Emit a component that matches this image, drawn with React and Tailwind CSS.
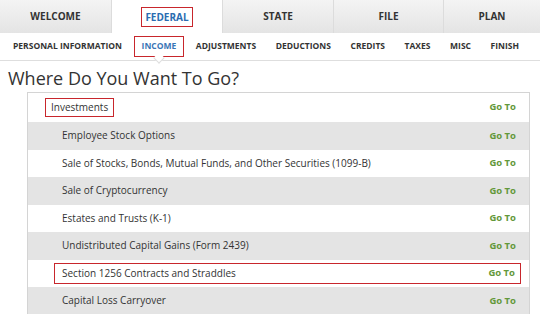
const tabs = [
  { t: 'WELCOME', w: 'w-[112px]' },
  { t: 'FEDERAL', w: 'w-[111px]' },
  { t: 'STATE', w: 'w-[111px]' },
  { t: 'FILE', w: 'w-[110px]' },
  { t: 'PLAN', w: 'flex-1' },
];
const subs = ['PERSONAL INFORMATION', 'INCOME', 'ADJUSTMENTS', 'DEDUCTIONS', 'CREDITS', 'TAXES', 'MISC', 'FINISH'];
const rows = [
  'Employee Stock Options',
  'Sale of Stocks, Bonds, Mutual Funds, and Other Securities (1099-B)',
  'Sale of Cryptocurrency',
  'Estates and Trusts (K-1)',
  'Undistributed Capital Gains (Form 2439)',
  'Section 1256 Contracts and Straddles',
  'Capital Loss Carryover',
];

const GoTo = () => (
  <span className="text-[9.5px] font-bold text-[#63983a] pr-[13px]">Go To</span>
);

export default function App() {
  return (
    <div className="w-[540px] h-[314px] overflow-hidden bg-white text-[#333]" style={{ fontFamily: '"Open Sans", sans-serif' }}>
      <div className="flex h-[33px]">
        {tabs.map(({ t, w }) => (
          <div
            key={t}
            className={`${w} flex items-center justify-center text-[10px] font-bold border-r border-[#dcdcdc] last:border-r-0 ${
              t === 'FEDERAL' ? 'bg-white text-[#2b6cb0]' : 'bg-gradient-to-b from-[#f4f4f4] to-[#e4e4e4]'
            }`}
          >
            {t === 'FEDERAL' ? (
              <span className="border-[1.5px] border-[#c8262c] px-[3px] py-[2px] leading-[14px]">{t}</span>
            ) : (
              t
            )}
          </div>
        ))}
      </div>
      <div className="flex items-center justify-between whitespace-nowrap h-[28px] border-b border-[#dedede] pl-[13px] pr-[21px] text-[8.5px] font-bold">
        {subs.map((s) =>
          s === 'INCOME' ? (
            <span key={s} className="relative text-[#3a76b6] border-[1.5px] border-[#c8262c] px-[7px] py-[3px] -mx-[8px]">
              {s}
              <span className="absolute left-1/2 -bottom-[6px] -ml-[4px] w-[8px] h-[8px] bg-white border-r border-b border-[#dedede] rotate-45" />
            </span>
          ) : (
            <span key={s}>{s}</span>
          )
        )}
      </div>
      <h1 className="text-[18px] leading-[28px] pl-[8px] pt-[3px] text-[#333]">Where Do You Want To Go?</h1>
      <div className="ml-[27px] w-[503px] border-l border-t border-r border-[#d4d4d4]">
        <div className="flex items-center justify-between h-[29px] bg-white">
          <span className="ml-[17px] text-[10px] border-[1.5px] border-[#c8262c] px-[5px] py-[1px]">Investments</span>
          <GoTo />
        </div>
        {rows.map((r, i) => (
          <div key={r} className={`flex items-center justify-between h-[27.5px] ${i % 2 === 0 ? 'bg-[#e4e4e4]' : 'bg-white'}`}>
            {r.startsWith('Section') ? (
              <div className="flex items-center justify-between ml-[26px] mr-[8px] flex-1 h-[21px] border-[1.5px] border-[#c8262c]">
                <span className="pl-[7px] text-[10px]">{r}</span>
                <span className="text-[9.5px] font-bold text-[#63983a] pr-[5px]">Go To</span>
              </div>
            ) : (
              <>
                <span className="ml-[34px] text-[10px]">{r}</span>
                <GoTo />
              </>
            )}
          </div>
        ))}
      </div>
    </div>
  );
}
